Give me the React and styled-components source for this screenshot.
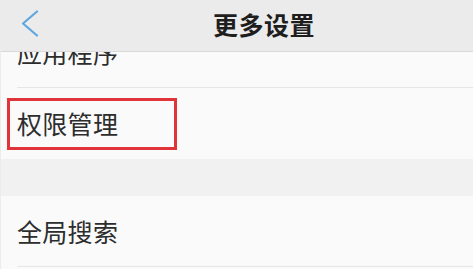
import styled, { createGlobalStyle } from "styled-components";

const GlobalStyle = createGlobalStyle`
  html, body {
    margin: 0;
    padding: 0;
    background: #fafafa;
  }
  body {
    font-family: "Noto Sans CJK SC", "Noto Sans", sans-serif;
  }
`;

const rows = [
  { title: "应用程序" },
  { title: "权限管理", marked: true },
  { gap: true },
  { title: "全局搜索" },
];

const App = () => {
  return (
    <Screen>
      <GlobalStyle />
      <Header>
        <BackButton aria-label="返回">
          <svg width="18" height="28" viewBox="0 0 18 28">
            <polyline
              points="16,1.5 2,13.5 16,25.5"
              fill="none"
              stroke="#5ea6de"
              strokeWidth="2.2"
              strokeLinecap="round"
              strokeLinejoin="round"
            />
          </svg>
        </BackButton>
        <Title>更多设置</Title>
      </Header>

      <List>
        <Scroll>
          {rows.map((r, i) =>
            r.gap ? (
              <Gap key={i} />
            ) : (
              <Row key={i} $last={i === rows.length - 1}>
                {r.marked ? (
                  <Marked>
                    <Label>{r.title}</Label>
                  </Marked>
                ) : (
                  <Label $pad>{r.title}</Label>
                )}
              </Row>
            )
          )}
        </Scroll>
      </List>
    </Screen>
  );
};

export default App;

const Screen = styled.div`
  width: 473px;
  height: 269px;
  overflow: hidden;
  display: flex;
  flex-direction: column;
  background: #fafafa;
  border-left: 1px solid #ececec;
  box-sizing: border-box;
`;

const Header = styled.div`
  position: relative;
  z-index: 2;
  height: 52px;
  flex-shrink: 0;
  display: flex;
  align-items: center;
  background: #ebebeb;
  border-bottom: 1px solid #d9d9d9;
  box-sizing: border-box;
  padding-left: 20px;
`;

const BackButton = styled.div`
  width: 18px;
  height: 28px;
  display: flex;
  margin-top: -3px;
`;

const Title = styled.div`
  margin-left: 174px;
  margin-top: -4px;
  font-size: 25px;
  font-weight: 700;
  color: #1e1e1e;
  letter-spacing: 0.5px;
`;

const List = styled.div`
  flex: 1;
  overflow: hidden;
`;

/* list is scrolled down a bit, first row half under the header */
const Scroll = styled.div`
  margin-top: -35px;
  display: flex;
  flex-direction: column;
`;

const Row = styled.div`
  height: 71px;
  display: flex;
  align-items: center;
  padding-left: 5px;
  background: #fafafa;
  box-sizing: border-box;
  position: relative;

  &::after {
    content: "";
    position: absolute;
    left: 16px;
    right: 0;
    bottom: 0;
    height: 1px;
    background: #e6e6e6;
    display: ${(p) => (p.$last ? "block" : "none")};
  }

  &:first-child::after {
    display: block;
  }
`;

const Label = styled.span`
  font-size: 25px;
  line-height: 1;
  color: #2d2d2d;
  letter-spacing: 0.3px;
  padding-left: ${(p) => (p.$pad ? "11px" : "0")};
`;

const Marked = styled.div`
  width: 170px;
  height: 52px;
  border: 3px solid #e0343a;
  box-sizing: border-box;
  display: flex;
  align-items: center;
  padding-left: 7px;
  margin-left: 1px;
`;

const Gap = styled.div`
  height: 37px;
  background: #f1f1f1;
`;
